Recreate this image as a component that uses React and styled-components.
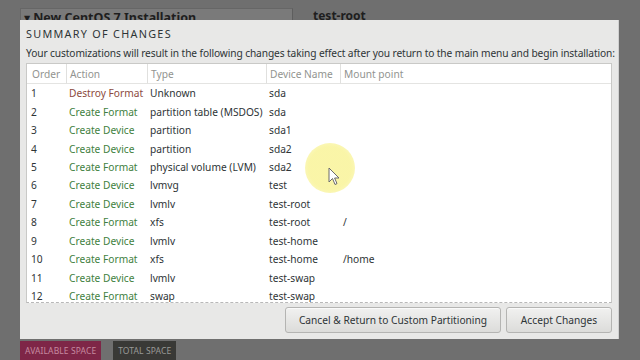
import React from "react";
import styled, { createGlobalStyle } from "styled-components";

const Global = createGlobalStyle`
  html, body { margin: 0; padding: 0; }
  body {
    width: 640px; height: 360px; overflow: hidden;
    background: #6f6f6f;
    font-family: "Noto Sans", "DejaVu Sans", sans-serif;
  }
`;

const Screen = styled.div`
  position: relative;
  width: 640px;
  height: 360px;
  display: flex;
  flex-direction: column;
  justify-content: space-between;
  overflow: hidden;
`;

const TopRow = styled.div`
  display: flex;
  align-items: flex-start;
  padding: 8px 0 0 20px;
  gap: 20px;
`;

const PanelHeader = styled.div`
  width: 273px;
  height: 12px;
  box-sizing: border-box;
  background: #7a7a7a;
  border: 1px solid #666;
  border-bottom: none;
  border-right-color: #5e5e5e;
  display: flex;
  align-items: flex-start;
  overflow: hidden;
  padding: 0 0 0 3px;
  font-size: 12.5px;
  line-height: 17px;
  font-weight: 700;
  color: #1e1e1e;
  gap: 3px;
`;

const Caret = styled.span`
  font-size: 8px;
`;

const SideTitle = styled.div`
  font-size: 12px;
  line-height: 14px;
  font-weight: 700;
  color: #1e1e1e;
  padding-top: 1px;
`;

const BottomRow = styled.div`
  display: flex;
  gap: 12px;
  padding-left: 20px;
`;

const Badge = styled.div`
  height: 19px;
  padding: 0 ${(p) => p.$pad}px;
  display: flex;
  align-items: center;
  font-size: 8.5px;
  letter-spacing: 0.1px;
  background: ${(p) => p.$bg};
  color: ${(p) => p.$fg};
`;

const Dialog = styled.div`
  position: absolute;
  left: 20px;
  top: 20px;
  width: 599px;
  height: 319px;
  box-sizing: border-box;
  background: #e8e8e7;
  border-right: 1px solid #d0d0d0;
  padding: 6px;
  display: flex;
  flex-direction: column;
  color: #2e3436;
`;

const Title = styled.div`
  font-size: 10.8px;
  line-height: 14px;
  height: 14px;
  margin-top: 1px;
  letter-spacing: 1.3px;
`;

const Description = styled.div`
  font-size: 10.2px;
  line-height: 14px;
  margin-top: 5px;
  letter-spacing: -0.11px;
  white-space: nowrap;
`;

const TableBox = styled.div`
  margin-top: 3px;
  height: 240px;
  box-sizing: border-box;
  background: #ffffff;
  border: 1px solid #c9c9c7;
  border-bottom: 1px dashed #b8b8b8;
  overflow: hidden;
`;

const Grid = styled.div`
  display: grid;
  grid-template-columns: 40px 81px 119px 74px 1fr;
`;

const HeadCell = styled.div`
  height: 20px;
  box-sizing: border-box;
  display: flex;
  align-items: center;
  padding-left: ${(p) => (p.$first ? 5 : 3)}px;
  font-size: 10.2px;
  color: #929490;
  border-bottom: 1px solid #e4e4e2;
  border-right: ${(p) => (p.$last ? "none" : "1px solid #e0e0de")};
`;

const Cell = styled.div`
  height: 18.45px;
  display: flex;
  align-items: center;
  padding-left: ${(p) => (p.$first ? 4 : 2)}px;
  font-size: 10.2px;
  white-space: nowrap;
  color: ${(p) => p.$color || "#2e3436"};
`;

const ButtonRow = styled.div`
  margin-top: 4px;
  display: flex;
  justify-content: flex-end;
  gap: 5px;
`;

const Button = styled.button`
  width: ${(p) => p.$w}px;
  height: 26px;
  box-sizing: border-box;
  border: 1px solid #b4b4b2;
  border-radius: 3px;
  background: linear-gradient(#f1f1f0, #dcdcda);
  box-shadow: inset 0 1px 0 #fafafa;
  font-family: inherit;
  font-size: 10.2px;
  color: #2e3436;
  padding: 0;
`;

const Highlight = styled.div`
  position: absolute;
  left: 305px;
  top: 143px;
  width: 50px;
  height: 50px;
  border-radius: 50%;
  background: radial-gradient(circle, rgba(249, 244, 158, 0.9) 60%, rgba(249, 244, 158, 0.4) 100%);
  pointer-events: none;
`;

const Cursor = styled.svg`
  position: absolute;
  left: 328px;
  top: 167px;
`;

const rows = [
  ["1", "Destroy Format", "Unknown", "sda", ""],
  ["2", "Create Format", "partition table (MSDOS)", "sda", ""],
  ["3", "Create Device", "partition", "sda1", ""],
  ["4", "Create Device", "partition", "sda2", ""],
  ["5", "Create Format", "physical volume (LVM)", "sda2", ""],
  ["6", "Create Device", "lvmvg", "test", ""],
  ["7", "Create Device", "lvmlv", "test-root", ""],
  ["8", "Create Format", "xfs", "test-root", "/"],
  ["9", "Create Device", "lvmlv", "test-home", ""],
  ["10", "Create Format", "xfs", "test-home", "/home"],
  ["11", "Create Device", "lvmlv", "test-swap", ""],
  ["12", "Create Format", "swap", "test-swap", ""],
];

const headers = ["Order", "Action", "Type", "Device Name", "Mount point"];

export default function App() {
  return (
    <>
      <Global />
      <Screen>
        <TopRow>
          <PanelHeader>
            <Caret>▼</Caret>
            New CentOS 7 Installation
          </PanelHeader>
          <SideTitle>test-root</SideTitle>
        </TopRow>
        <BottomRow>
          <Badge $bg="#7e2647" $fg="#c68aa0" $pad={5}>AVAILABLE SPACE</Badge>
          <Badge $bg="#393936" $fg="#9a9a96" $pad={5}>TOTAL SPACE</Badge>
        </BottomRow>

        <Dialog>
          <Title>SUMMARY OF CHANGES</Title>
          <Description>
            Your customizations will result in the following changes taking effect after you return to the main menu and begin installation:
          </Description>
          <TableBox>
            <Grid>
              {headers.map((h, i) => (
                <HeadCell key={h} $first={i === 0} $last={i === headers.length - 1}>
                  {h}
                </HeadCell>
              ))}
              {rows.map((r) =>
                r.map((c, i) => (
                  <Cell
                    key={r[0] + "-" + i}
                    $first={i === 0}
                    $color={
                      i === 1 ? (c.startsWith("Destroy") ? "#8c4a40" : "#3f7f3e") : undefined
                    }
                  >
                    {c}
                  </Cell>
                ))
              )}
            </Grid>
          </TableBox>
          <ButtonRow>
            <Button $w={216}>Cancel &amp; Return to Custom Partitioning</Button>
            <Button $w={106}>Accept Changes</Button>
          </ButtonRow>
        </Dialog>

        <Highlight />
        <Cursor width="12" height="19" viewBox="0 0 12 19">
          <path d="M1 1 L1 15 L4.5 11.5 L7 17.5 L9 16.6 L6.6 11 L11 11 Z" fill="#ffffff" stroke="#6a6a6a" strokeWidth="1" strokeLinejoin="round" />
        </Cursor>
      </Screen>
    </>
  );
}
